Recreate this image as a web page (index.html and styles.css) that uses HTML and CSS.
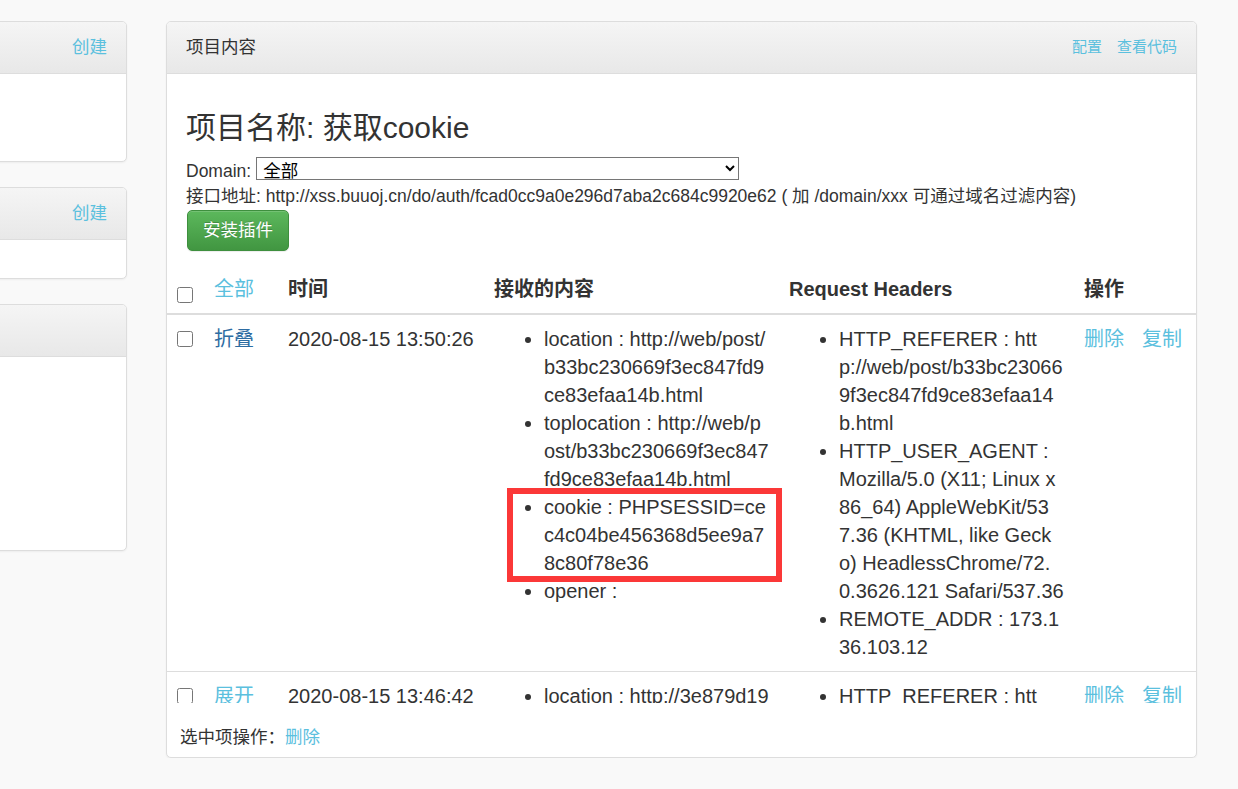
FILE: index.html
```html
<!DOCTYPE html>
<html lang="zh-CN">
<head>
<meta charset="utf-8">
<title>项目内容</title>
<link rel="stylesheet" href="styles.css">
</head>
<body>
<div class="layout">
  <aside class="side">
    <div class="panel">
      <div class="panel-heading side-heading"><span class="heading-title">我的项目</span><a class="link create" href="#">创建</a></div>
      <div class="panel-body side-body-1"></div>
    </div>
    <div class="panel">
      <div class="panel-heading side-heading"><span class="heading-title">我的模块</span><a class="link create" href="#">创建</a></div>
      <div class="panel-body side-body-2"></div>
    </div>
    <div class="panel">
      <div class="panel-heading side-heading"><span class="heading-title">公共模块</span></div>
      <div class="panel-body side-body-3"></div>
    </div>
  </aside>

  <main class="panel main-panel">
    <div class="panel-heading main-heading">
      <span class="main-title">项目内容</span>
      <span class="heading-links"><a class="link small" href="#">配置</a><a class="link small" href="#">查看代码</a></span>
    </div>
    <div class="main-body">
      <section class="info">
        <h3 class="project-name">项目名称: 获取cookie</h3>
        <div class="domain-row">
          <label class="domain-label">Domain:</label>
          <select class="domain-select"><option>全部</option></select>
        </div>
        <div class="api-line">接口地址: http://xss.buuoj.cn/do/auth/fcad0cc9a0e296d7aba2c684c9920e62 ( 加 /domain/xxx 可通过域名过滤内容)</div>
        <button class="btn-success" type="button">安装插件</button>
      </section>

      <div class="table-wrap">
        <table class="data-table">
          <colgroup>
            <col class="c-check"><col class="c-toggle"><col class="c-time"><col class="c-content"><col class="c-headers"><col class="c-ops">
          </colgroup>
          <thead>
            <tr>
              <th><input class="check head-check" type="checkbox"></th>
              <th><a class="link normal" href="#">全部</a></th>
              <th>时间</th>
              <th>接收的内容</th>
              <th>Request Headers</th>
              <th>操作</th>
            </tr>
          </thead>
          <tbody>
            <tr>
              <td><input class="check" type="checkbox"></td>
              <td><a class="link dark" href="#">折叠</a></td>
              <td>2020-08-15 13:50:26</td>
              <td>
                <ul class="kv">
                  <li>location : http://web/post/b33bc230669f3ec847fd9ce83efaa14b.html</li>
                  <li>toplocation : http://web/post/b33bc230669f3ec847fd9ce83efaa14b.html</li>
                  <li class="marked">cookie : PHPSESSID=cec4c04be456368d5ee9a78c80f78e36</li>
                  <li>opener : </li>
                </ul>
              </td>
              <td>
                <ul class="kv">
                  <li>HTTP_REFERER : http://web/post/b33bc230669f3ec847fd9ce83efaa14b.html</li>
                  <li>HTTP_USER_AGENT : Mozilla/5.0 (X11; Linux x86_64) AppleWebKit/537.36 (KHTML, like Gecko) HeadlessChrome/72.0.3626.121 Safari/537.36</li>
                  <li>REMOTE_ADDR : 173.136.103.12</li>
                </ul>
              </td>
              <td class="ops"><a class="link normal" href="#">删除</a><a class="link normal" href="#">复制</a></td>
            </tr>
            <tr>
              <td><input class="check" type="checkbox"></td>
              <td><a class="link normal" href="#">展开</a></td>
              <td>2020-08-15 13:46:42</td>
              <td>
                <ul class="kv">
                  <li>location : http://3e879d19ab.web/post/index.html</li>
                  <li>toplocation : http://3e879d19ab.web/post/index.html</li>
                </ul>
              </td>
              <td>
                <ul class="kv">
                  <li>HTTP_REFERER : http://3e879d19ab.web/post/index.html</li>
                </ul>
              </td>
              <td class="ops"><a class="link normal" href="#">删除</a><a class="link normal" href="#">复制</a></td>
            </tr>
          </tbody>
        </table>
      </div>

      <div class="selection-bar">选中项操作：<a class="link normal" href="#">删除</a></div>
    </div>
  </main>
</div>
</body>
</html>
```

FILE: styles.css
```css
* { box-sizing: border-box; }

html, body {
  margin: 0;
  padding: 0;
}

body {
  background: #f9f9f9;
  color: #333;
  font-family: "Liberation Sans", Arial, "Noto Sans CJK SC", sans-serif;
  font-size: 17.5px;
  line-height: 25px;
  overflow: hidden;
}

.layout {
  display: flex;
  align-items: flex-start;
  padding-top: 21px;
}

.side {
  width: 150px;
  margin-left: -23px;
  flex: none;
}

.panel {
  background: #fff;
  border: 1px solid #ddd;
  border-radius: 5px;
  box-shadow: 0 1px 2px rgba(0, 0, 0, 0.05);
}

.side .panel { margin-bottom: 25px; }

.panel-heading {
  display: flex;
  justify-content: space-between;
  align-items: center;
  padding: 13px 19px;
  line-height: 25px;
  background: linear-gradient(to bottom, #f5f5f5 0, #e8e8e8 100%);
  border-bottom: 1px solid #ddd;
  border-radius: 4px 4px 0 0;
}

.heading-title { visibility: hidden; white-space: nowrap; }

.side-body-1 { height: 87px; }
.side-body-2 { height: 38px; }
.side-body-3 { height: 193px; }

.link { color: #5bc0de; text-decoration: none; }
.link.dark { color: #2d6ca2; }
.link.small { font-size: 15px; line-height: 22px; }
.heading-links { display: flex; align-items: center; margin-top: -2px; }
.heading-links .link + .link { margin-left: 15px; }

.main-panel {
  width: 1031px;
  margin-left: 39px;
  flex: none;
}

.main-title { font-size: 17.5px; }

.info {
  padding: 37px 19px 0;
}

.project-name {
  margin: 0;
  font-size: 30px;
  line-height: 33px;
  font-weight: 400;
}

.domain-row {
  display: flex;
  align-items: flex-start;
  height: 25px;
  margin-top: 13px;
}

.domain-label { padding-top: 2px; }

.domain-select {
  margin-left: 5px;
  width: 483px;
  height: 23px;
  font-family: "Liberation Sans", Arial, "Noto Sans CJK SC", sans-serif;
  font-size: 17.5px;
  color: #000;
  background: #fff;
  border: 1px solid #767676;
  border-radius: 0;
  padding: 2px 2px 0;
}

.api-line {
  margin-top: 2px;
  white-space: nowrap;
}

.btn-success {
  display: block;
  margin: 1px 0 0 1px;
  padding: 7px 15px;
  font-family: "Liberation Sans", Arial, "Noto Sans CJK SC", sans-serif;
  font-size: 17.5px;
  line-height: 25px;
  color: #fff;
  background: linear-gradient(to bottom, #5cb85c 0, #419641 100%);
  border: 1px solid #3e8f3e;
  border-radius: 5px;
  box-shadow: inset 0 1px 0 rgba(255, 255, 255, 0.15), 0 1px 1px rgba(0, 0, 0, 0.075);
  text-shadow: 0 -1px 0 rgba(0, 0, 0, 0.2);
}

.table-wrap {
  margin-top: 14px;
  height: 438px;
  overflow: hidden;
}

.data-table {
  width: 1029px;
  table-layout: fixed;
  border-collapse: collapse;
  font-size: 20px;
  line-height: 28px;
}

.c-check { width: 37px; }
.c-toggle { width: 74px; }
.c-time { width: 206px; }
.c-content { width: 295px; }
.c-headers { width: 295px; }
.c-ops { width: 122px; }

.data-table th,
.data-table td {
  padding: 10px;
  text-align: left;
}

.data-table th {
  vertical-align: bottom;
  font-weight: bold;
  border-bottom: 2px solid #ddd;
  white-space: nowrap;
}

.data-table th .link { font-weight: normal; }

.data-table td {
  vertical-align: top;
  border-top: 1px solid #ddd;
}

.data-table thead + tbody tr:first-child td { border-top: 0; }

.check {
  display: block;
  width: 16px;
  height: 16px;
  margin: 6px 0 0;
}

.head-check { margin: 12px 0 0; }

.kv {
  margin: 0;
  padding-left: 50px;
  word-break: break-all;
}

.kv li { position: relative; }

.marked::after {
  content: "";
  position: absolute;
  left: -37px;
  right: -13px;
  top: -5px;
  bottom: -5px;
  border: 6px solid #fb3838;
  pointer-events: none;
}

.ops { white-space: nowrap; }
.ops .link + .link { margin-left: 18px; }

.selection-bar {
  padding: 22px 13px 7px;
  line-height: 25px;
}
```
